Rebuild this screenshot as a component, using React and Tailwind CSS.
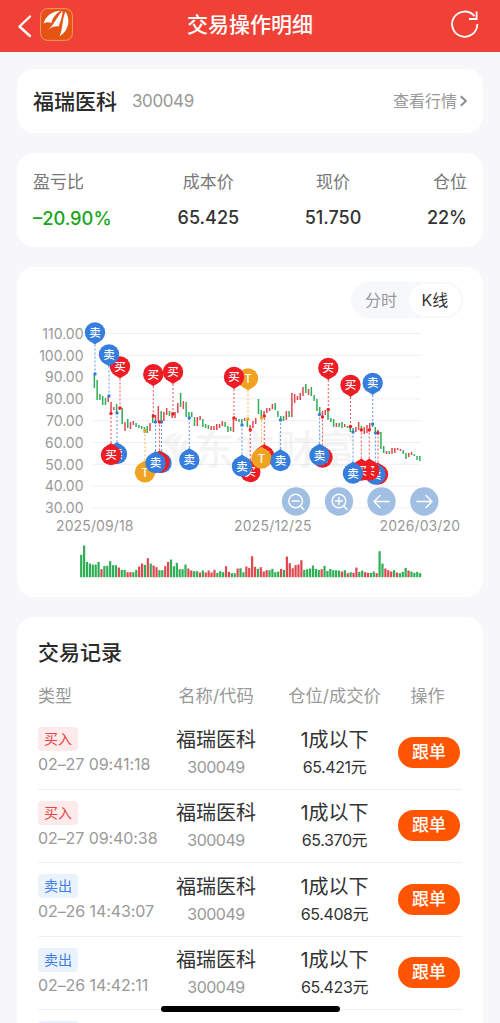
import { useState } from 'react'

const COLORS = { r: '#e0474f', g: '#2fae55' }

const MARKER = {
  buy: { color: '#ee1c25', label: '买' },
  sell: { color: '#357edd', label: '卖' },
  t: { color: '#f0a321', label: 'T' },
}

// direction, high, low for each day
const CANDLES = `g374-388 g380-400 g394-400 g396-405 g398-405 r396-402 r402-414 r407-410 g404-413 r407-410
g408-424 r422-431 g419-428 r422-429 r421-425 g423-427 g425-428 g426-429 g427-433 g426-433
r423-431 g414-423 r415-422 r406-422 g411-422 r412-421 r408-415 g411-416 r412-418 r412-418
r403-413 g393-407 r401-409 g402-417 g412-419 g412-417 g417-426 r417-426 r416-420 g419-427
g424-428 g425-429 r426-430 r426-430 r424-430 r424-428 r421-426 g422-427 g426-432 g427-431
r417-432 r418-421 g419-422 g419-426 r418-421 g419-427 r425-431 r421-428 r418-424 g399-414
g410-417 r411-417 r408-413 r408-411 r404-409 g403-410 g411-417 g416-421 g416-421 r411-420
g411-417 r393-417 r394-403 r396-400 r393-400 r387-396 g384-393 r389-395 g387-396 g395-401
g399-411 g407-414 r411-416 r410-415 g410-420 g418-422 g419-427 r423-427 g423-427 g422-428
r424-427 g426-428 g425-432 g428-433 r427-432 r422-430 g426-431 r427-434 r425-433 r423-430
g423-427 g427-433 r430-433 g432-449 g446-453 r451-454 g451-454 r448-454 r448-453 r448-450
r449-451 g450-454 g453-459 r453-457 r452-455 g454-456 g456-460 g456-461`
  .split(/\s+/)
  .map((s) => [s[0], ...s.slice(1).split('-').map(Number)])

const VOLUMES = `g67 g95 g46 g41 g38 g38 g46 r24 g34 g34 g48 g36 g36 r29 g22 g22 r15 r15 g15 g22
r32 r41 g37 r57 g41 r35 r30 g21 g21 r33 r46 g53 g33 g43 g24 g24 g38 r26 r20 g18
g18 r14 g20 r14 r20 r14 r22 g13 g18 g15 r33 r16 g12 g12 r26 g27 g15 r32 r28 r63
r31 g25 r30 r17 r21 g21 g25 g15 g17 r25 g22 r62 r42 r27 r36 r38 r51 g22 g24 g26
g35 g25 g22 r24 g34 g19 g25 g21 g21 g20 r17 g21 r12 g15 r13 r29 g16 g20 r15 r13
g13 g17 r12 g78 g41 r26 r21 r17 g21 r14 g12 g16 g28 r20 g17 g13 g16 g12`
  .split(/\s+/)
  .map((s) => [s[0], Number(s.slice(1)) / 3])

// type, x, centre of the pin, price point; drawn in this order
const MARKERS = [
  ['buy', 120, 366.5, 408],
  ['sell', 109, 354.5, 396],
  ['sell', 95, 332.5, 374],
  ['buy', 153.3, 374.3, 416],
  ['buy', 173, 372, 414],
  ['t', 248, 378.5, 419],
  ['buy', 234, 377, 418],
  ['buy', 328.3, 368, 409.5],
  ['buy', 350.5, 385, 426.5],
  ['sell', 372.7, 383, 424],
  ['sell', 117, 454, 413],
  ['buy', 111, 455, 413.5],
  ['t', 145, 472.3, 431],
  ['sell', 161.5, 463, 422],
  ['buy', 159.5, 462.5, 422],
  ['sell', 155.5, 463, 422],
  ['sell', 189.3, 460, 418],
  ['buy', 250.3, 472, 430],
  ['sell', 242, 466.5, 425],
  ['buy', 264.3, 456, 416],
  ['t', 261.5, 458.5, 418],
  ['sell', 280.5, 461, 420],
  ['buy', 322.5, 457.5, 417],
  ['sell', 319.5, 455.5, 414.5],
  ['buy', 378, 474.5, 433],
  ['sell', 375.5, 474.5, 433],
  ['buy', 369.3, 470.5, 430],
  ['buy', 361.3, 470.5, 430],
  ['sell', 353, 473.5, 432],
]

const PRICES = ['110.00', '100.00', '90.00', '80.00', '70.00', '60.00', '50.00', '40.00', '30.00']

const RECORDS = [
  { side: '买入', time: '02–27 09:41:18', price: '65.421元' },
  { side: '买入', time: '02–27 09:40:38', price: '65.370元' },
  { side: '卖出', time: '02–26 14:43:07', price: '65.408元' },
  { side: '卖出', time: '02–26 14:42:11', price: '65.423元' },
]

function Pin({ type, x, cy, py }) {
  const { color, label } = MARKER[type]
  const down = py > cy
  const tip = down ? cy + 12 : cy - 12
  const base = down ? cy + 8.5 : cy - 8.5
  return (
    <g>
      <circle cx={x} cy={cy} r="10.2" fill={color} />
      <path d={`M${x - 5} ${base}L${x} ${tip}L${x + 5} ${base}Z`} fill={color} />
      <text x={x} y={cy + 4.4} textAnchor="middle" fontSize="11.5" fontWeight="500" fill="#fff">{label}</text>
    </g>
  )
}

function KLineChart() {
  return (
    <svg className="block w-full h-[272px]" viewBox="17 318 466 272">
      {PRICES.map((p, i) => (
        <g key={p}>
          <path d={`M92 ${333.5 + i * 21.8}H421`} stroke="#f0f0f3" strokeWidth="1" />
          <text x="83.5" y={338.7 + i * 21.8} textAnchor="end" fontSize="14" fill="#999">{p}</text>
        </g>
      ))}

      {/* Watermark */}
      <g fill="#999" opacity="0.1">
        <path d="M160 443c7-8 13-10 20-11-7 5-10 9-11 14 5-8 10-12 15-12-6 6-7 12-6 18 3-7 5-11 9-13 1 10-3 19-11 26-2-9-4-15-9-18 0-3-3-4-7-4z" />
        <text x="194" y="464" fontSize="40" fontWeight="500" textLength="162">东方财富</text>
      </g>

      {/* Guides from the pins to the price */}
      {MARKERS.map(([type, x, cy, py], i) => (
        <path key={i} d={`M${x} ${cy}V${py}`} stroke={MARKER[type].color} strokeWidth="1.1" strokeDasharray="2 2" opacity="0.7" />
      ))}

      {CANDLES.map(([c, top, bottom], i) => (
        <rect key={i} x={93.6 + i * 2.782} y={top} width="1.5" height={bottom - top} fill={COLORS[c]} />
      ))}

      {MARKERS.map(([type, x, , py], i) => (
        <circle key={i} cx={x} cy={py} r="1.7" fill={MARKER[type].color} />
      ))}
      {MARKERS.map(([type, x, cy, py], i) => (
        <Pin key={i} type={type} x={x} cy={cy} py={py} />
      ))}

      {/* Zoom and scroll buttons */}
      {[296, 339, 381.5, 424.3].map((x) => (
        <circle key={x} cx={x} cy="501.5" r="14.2" fill="#a1bfe3" />
      ))}
      <g fill="none" stroke="#fff" strokeWidth="1.4" strokeLinecap="round" strokeLinejoin="round">
        <circle cx="295.6" cy="501" r="6.8" />
        <path d="M292.1 501h7M300.5 506l3.3 3.6" />
        <circle cx="338.9" cy="501" r="6.8" />
        <path d="M335.4 501h7M338.9 497.5v7M343.8 506l3.3 3.6" />
        <path d="M389 501.5h-15M380 495.5l-6 6 6 6" />
        <path d="M417 501.5h15M426 495.5l6 6-6 6" />
      </g>

      <g fontSize="14" fill="#999">
        <text x="56" y="531" textLength="77.5">2025/09/18</text>
        <text x="234" y="531" textLength="77.5">2025/12/25</text>
        <text x="379.5" y="531" textLength="80.5">2026/03/20</text>
      </g>

      {VOLUMES.map(([c, h], i) => (
        <rect key={i} x={80.1 + i * 2.897} y={577.2 - h} width="2.2" height={h} fill={COLORS[c]} />
      ))}
    </svg>
  )
}

function Header() {
  return (
    <header className="flex h-[52px] shrink-0 items-center justify-between bg-[#ef4136] pl-[17px] pr-[21px]">
      <div className="flex w-16 items-center gap-2">
        <svg width="15" height="24" viewBox="0 0 15 24" fill="none" stroke="#fff" strokeWidth="2.4" strokeLinecap="round" strokeLinejoin="round">
          <path d="M13 2.5L2.5 12.5 13 22" />
        </svg>
        <svg className="mb-1 shrink-0" width="33" height="33" viewBox="0 0 33 33">
          <defs>
            <linearGradient id="logo" x1="0" y1="0" x2="1" y2="1">
              <stop offset="0" stopColor="#e8501c" />
              <stop offset="1" stopColor="#e2570c" />
            </linearGradient>
          </defs>
          <rect x=".6" y=".6" width="31.8" height="31.8" rx="7" fill="url(#logo)" stroke="#f59a62" strokeWidth="1" />
          <path d="M3.500 15.500C6 8 12 3 21 2.800C16 5.500 12.500 10 11.500 15C8.800 13.800 6.500 14 3.500 15.500Z" fill="#fff" />
          <path d="M8.500 21.500C14 17 17 8.500 22.500 2.800C22.500 9 20.500 12.500 18.800 18.500C15.500 17.800 12 18.800 8.500 21.500Z" fill="#fff" />
          <path d="M19.500 28.500C23 21 22 11 25.500 3.500C30.500 11 29.500 22 19.500 28.500Z" fill="#fff" />
        </svg>
      </div>
      <h1 className="pb-0.5 text-[21px] font-medium text-white">交易操作明细</h1>
      <div className="flex w-[60px] justify-end pb-1">
        <svg width="30" height="30" viewBox="0 0 30 30" fill="none" stroke="#fff" strokeWidth="1.8">
          <path d="M28.300 15A12.600 12.600 0 1 1 25.500 7.200" />
          <path d="M27.600 2.500V10H20" />
        </svg>
      </div>
    </header>
  )
}

function StockCard() {
  return (
    <section className="flex h-16 shrink-0 items-center rounded-[17px] bg-white px-4">
      <h2 className="pt-px text-[21px] font-medium text-[#2b2b2b]">福瑞医科</h2>
      <span className="ml-[15px] pt-0.5 text-[17px] tracking-[-0.4px] text-[#999]">300049</span>
      <a className="ml-auto flex items-center gap-[3px] text-base text-[#999]">
        查看行情
        <svg width="7" height="12" viewBox="0 0 7 12" fill="none" stroke="#888" strokeWidth="1.9">
          <path d="M.8 1.200L5.900 6 .8 10.800" />
        </svg>
      </a>
    </section>
  )
}

function Stat({ label, value, className }) {
  return (
    <div className={`flex flex-col gap-3 whitespace-nowrap ${className}`}>
      <span className="text-[17px] leading-6 text-[#777]">{label}</span>
      <span className="text-[18px] leading-6 font-medium">{value}</span>
    </div>
  )
}

function StatsCard() {
  return (
    <section className="flex h-[94px] shrink-0 items-center justify-between rounded-[17px] bg-white px-4 text-[#333]">
      <Stat label="盈亏比" value={<span className="text-[18.3px] text-[#17a51a]">–20.90%</span>} className="w-[79px]" />
      <Stat label="成本价" value="65.425" className="items-center" />
      <Stat label="现价" value="51.750" className="items-center" />
      <Stat label="仓位" value="22%" className="items-end" />
    </section>
  )
}

function ChartCard() {
  const [tab, setTab] = useState('K线')

  return (
    <section className="flex h-[330px] shrink-0 flex-col rounded-[17px] bg-white">
      <div className="mt-[15px] mr-5 flex h-9 items-center self-end rounded-full bg-[#f7f8fb] p-[2px]">
        {['分时', 'K线'].map((t) => (
          <button
            key={t}
            onClick={() => setTab(t)}
            className={`h-8 rounded-full text-base ${t === 'K线' ? 'w-[52px]' : 'w-[56px]'} ${
              tab === t ? 'bg-white text-[#333]' : 'text-[#999]'
            }`}
          >
            {t}
          </button>
        ))}
      </div>
      <KLineChart />
    </section>
  )
}

function SideTag({ side }) {
  return (
    <span
      className={`flex h-6 w-10 items-center justify-center rounded-[4px] text-sm ${
        side === '买入' ? 'bg-[#fdeaea] text-[#e8423f]' : 'bg-[#eaf2fd] text-[#3f7fe0]'
      }`}
    >
      {side}
    </span>
  )
}

function RecordRow({ side, time, price }) {
  return (
    <div className="grid h-[73.5px] shrink-0 grid-cols-[118px_120px_117px_69px] border-b border-[#f0f0f2] pt-[11px]">
      <div className="flex flex-col items-start gap-px">
        <SideTag side={side} />
        <span className="text-[16px] leading-6 tracking-[-0.08px] whitespace-nowrap text-[#999]">{time}</span>
      </div>
      <div className="flex flex-col items-center pt-[0.5px]">
        <span className="text-[20px] leading-[25px] text-[#333]">福瑞医科</span>
        <span className="text-[16px] leading-7 tracking-[-0.5px] text-[#999]">300049</span>
      </div>
      <div className="flex flex-col items-center pt-[0.5px]">
        <span className="text-[20px] leading-[25px] text-[#333]">1成以下</span>
        <span className="text-[16px] leading-7 tracking-[-0.4px] text-[#333]">{price}</span>
      </div>
      <div className="flex justify-end pt-[9.5px] pr-[2px]">
        <button className="flex h-[31px] w-[62px] items-center justify-center rounded-full bg-[#ff5500] text-[17px] leading-none font-medium text-white">
          跟单
        </button>
      </div>
    </div>
  )
}

function RecordsCard() {
  return (
    <section className="flex h-[460px] shrink-0 flex-col rounded-t-[17px] bg-white px-[21px]">
      <h2 className="mt-[20px] text-[21px] leading-8 font-medium text-[#2b2b2b]">交易记录</h2>
      <div className="mt-[15px] mb-[8px] grid grid-cols-[118px_120px_117px_69px] text-center text-[17px] leading-6 text-[#999]">
        <span className="text-left">类型</span>
        <span className="text-[17.3px]">名称/代码</span>
        <span className="text-[17.3px]">仓位/成交价</span>
        <span>操作</span>
      </div>
      {RECORDS.map((r) => (
        <RecordRow key={r.time} {...r} />
      ))}
      {/* Next row, only its tag peeks in above the fold */}
      <div className="pt-[11px]">
        <div className="h-6 w-10 rounded-[4px] bg-[#eaf2fd]" />
      </div>
    </section>
  )
}

export default function App() {
  return (
    <div className="relative flex h-[1023px] w-[500px] flex-col overflow-hidden bg-[#f7f7fa] font-[Inter,'Noto_Sans_CJK_SC',sans-serif]">
      <Header />
      <main className="flex flex-col gap-5 px-[17px] pt-[17px]">
        <StockCard />
        <StatsCard />
        <ChartCard />
        <RecordsCard />
      </main>
      {/* Home indicator */}
      <div className="absolute bottom-[11px] left-[161px] h-[6px] w-[179px] rounded-full bg-black" />
    </div>
  )
}
